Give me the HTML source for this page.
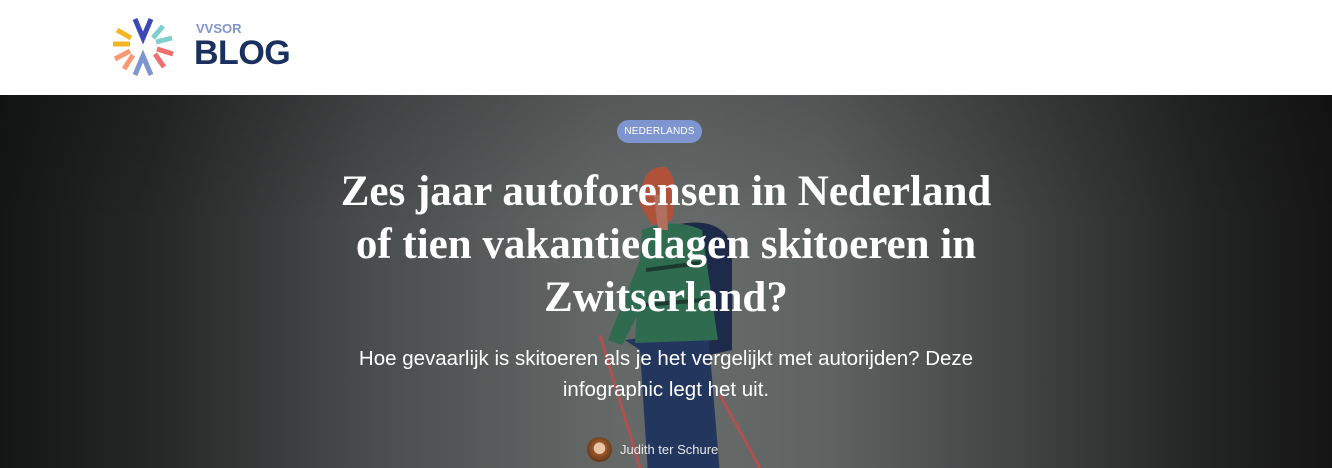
<!DOCTYPE html>
<html><head><meta charset="utf-8"><style>
*{margin:0;padding:0;box-sizing:border-box}
body{width:1332px;height:468px;overflow:hidden;background:#fff;font-family:"Liberation Sans",sans-serif}
header{height:95px;position:relative;background:#fff}
.hero{position:absolute;top:95px;left:0;width:1332px;height:373px;overflow:hidden;
background:linear-gradient(to right,#141515 0%,#262828 12%,#4a4d4d 28%,#636766 45%,#666a69 52%,#5f6362 62%,#434545 76%,#242525 90%,#151515 100%)}
.vshade{position:absolute;inset:0;background:linear-gradient(to bottom,rgba(0,0,0,.15),rgba(0,0,0,0) 35%,rgba(0,0,0,0))}
.badge{position:absolute;left:617px;top:25px;width:85px;height:23px;border-radius:12px;background:#7f95cf;color:#fff;font-size:10px;text-align:center;line-height:23px;letter-spacing:.2px}
h1{position:absolute;left:216px;width:900px;top:70px;text-align:center;color:#fff;font-family:"Liberation Serif",serif;font-weight:bold;font-size:43px;line-height:53px}
.sub{position:absolute;left:216px;width:900px;top:248px;text-align:center;color:#fff;font-size:20.5px;line-height:31px}
.author{position:absolute;left:587px;top:437px;color:#e8e8e8;font-size:13px;display:flex;align-items:center}
.av{width:25px;height:25px;border-radius:50%;background:radial-gradient(circle at 50% 45%,#e8c4a8 0 30%,#9a5a2a 32%,#6a3a1a 70%);margin-right:8px}
</style></head><body>
<header>
<svg style="position:absolute;left:112px;top:16px" width="64" height="62" viewBox="0 0 64 62">
<g stroke-linecap="butt" stroke-width="5" fill="none">
<path d="M23 3 L31 22 L39 3" stroke="#3a49b5"/>
<path d="M51 10 L41 22" stroke="#7fcfcf"/><path d="M60 22 L44 26" stroke="#7fcfcf"/>
<path d="M5 14 L19 22" stroke="#f3b623"/><path d="M1 28 L18 28" stroke="#f3b623"/>
<path d="M3 43 L18 35" stroke="#f79a73"/><path d="M12 53 L21 39" stroke="#f79a73"/>
<path d="M61 38 L45 33" stroke="#ef6e6e"/><path d="M52 51 L43 38" stroke="#ef6e6e"/>
<path d="M23 59 L31 40 L39 59" stroke="#7f95cf"/>
</g></svg>
<div style="position:absolute;left:196px;top:21px;color:#7f95cf;font-weight:bold;font-size:13px">VVSOR</div>
<div style="position:absolute;left:194px;top:34px;color:#1a3160;font-weight:bold;font-size:34px;letter-spacing:-0.5px">BLOG</div>
</header>
<div class="hero">
<div class="vshade"></div>
<svg style="position:absolute;left:580px;top:0" width="200" height="373" viewBox="0 0 200 373">
<path d="M20 240 L60 373" stroke="#b05050" stroke-width="3"/>
<path d="M140 300 L180 373" stroke="#b05050" stroke-width="3"/>
<path d="M95 130 Q140 120 152 150 L152 255 L120 262 Z" fill="#1e2a4a"/>
<path d="M45 245 L60 255 L68 380 L140 380 L128 235 Z" fill="#23365e"/>
<path d="M62 135 Q95 122 122 135 L138 245 L55 248 Z" fill="#2e6b4f"/>
<path d="M62 160 L28 245 L42 250 L78 180 Z" fill="#2e6b4f"/>
<path d="M66 175 L120 168" stroke="#1c3a30" stroke-width="4"/>
<path d="M62 210 L125 205" stroke="#1c3a30" stroke-width="4"/>
<path d="M60 110 Q60 70 85 72 Q100 80 92 125 L72 130 Z" fill="#b0523a"/>
<path d="M74 100 L78 135 L88 135 L86 100 Z" fill="#b07060"/>
</svg>
<div class="badge">NEDERLANDS</div>
<h1>Zes jaar autoforensen in Nederland<br>of tien vakantiedagen skitoeren in<br>Zwitserland?</h1>
<div class="sub">Hoe gevaarlijk is skitoeren als je het vergelijkt met autorijden? Deze<br>infographic legt het uit.</div>
</div>
<div class="author"><div class="av"></div>Judith ter Schure</div>
</body></html>
